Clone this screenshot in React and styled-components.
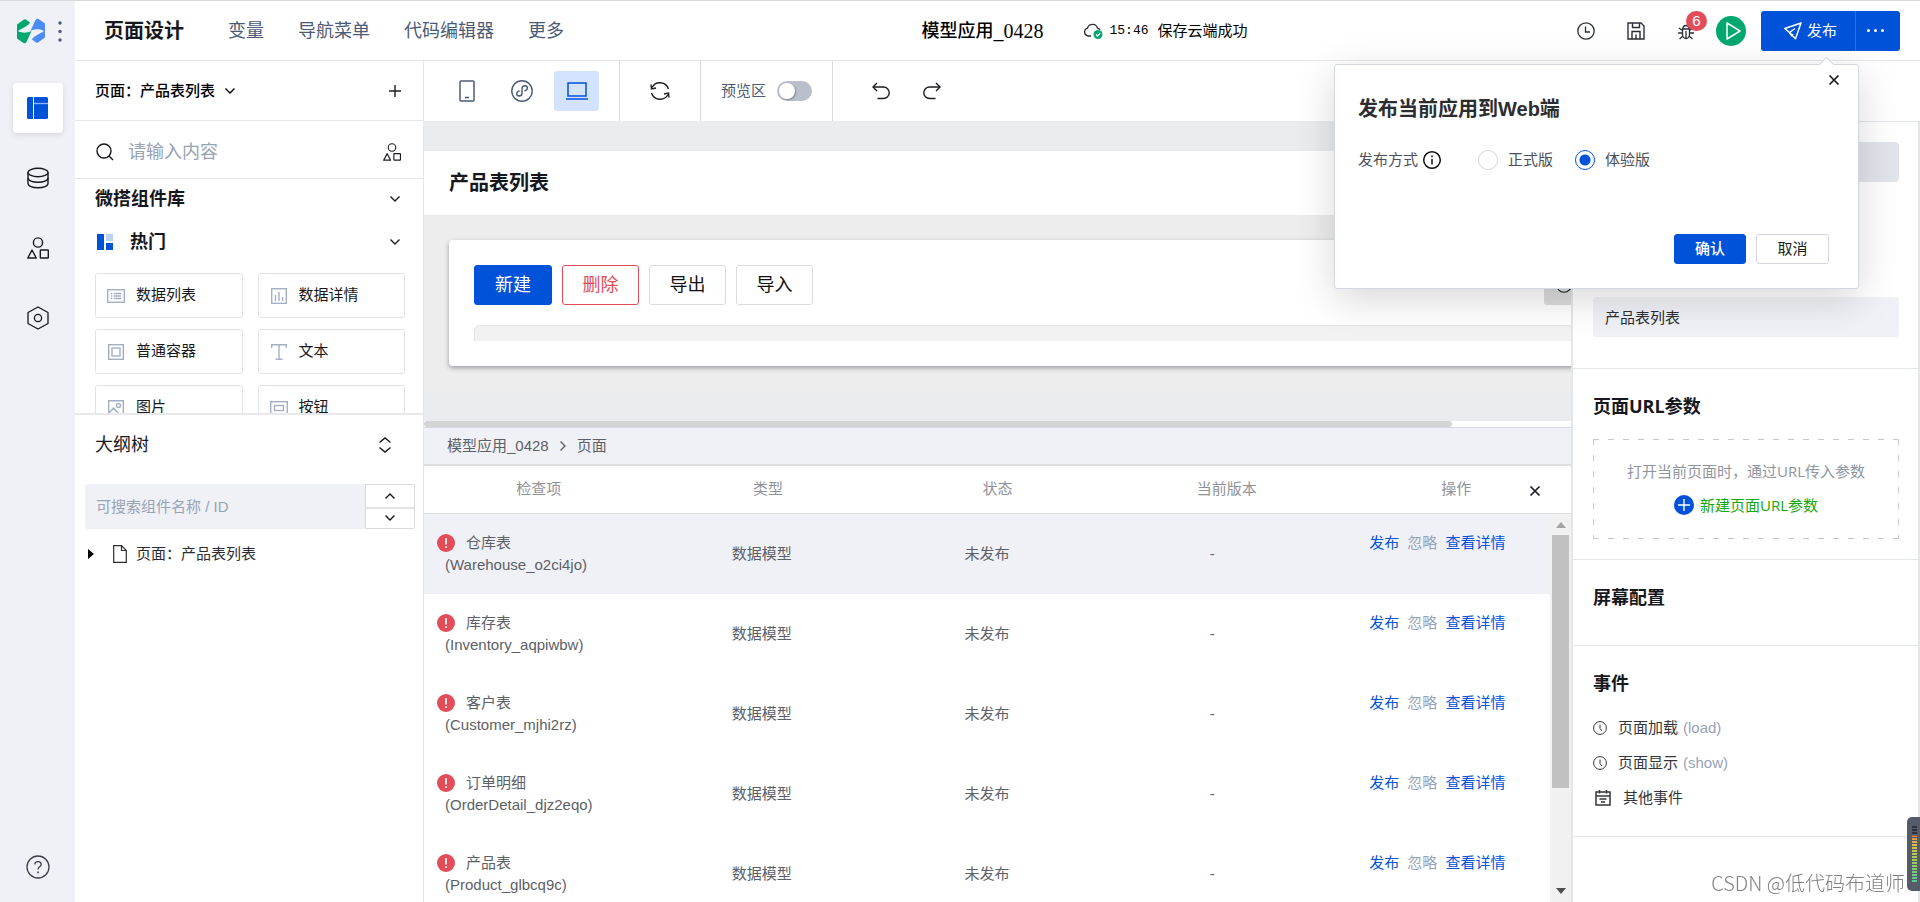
import React, { useState } from 'react';
import styled, { createGlobalStyle, css } from 'styled-components';

const SANS = '"Liberation Sans", "Noto Sans CJK SC", sans-serif';
const SONG = '"Liberation Serif", "Noto Sans CJK SC", serif';
const HUMAN = '"Open Sans", "Noto Sans CJK SC", sans-serif';

const BLUE = '#0052d9';
const RED = '#e34d59';
const GREEN = '#00a870';
const PALE = '#f0f1f6';
const LINE = '#e3e6eb';
const INK = '#16181d';

const GlobalStyle = createGlobalStyle`
    * {
        box-sizing: border-box;
    }
    body {
        margin: 0;
        font-family: ${SANS};
        font-size: 15px;
        line-height: 22px;
        color: ${INK};
        background: #fff;
    }
    button, input {
        font: inherit;
        color: inherit;
        margin: 0;
        padding: 0;
        border: 0;
        background: none;
    }
    button {
        cursor: pointer;
    }
    input:focus {
        outline: none;
    }
    h1, h2, h3, p, ul {
        margin: 0;
        padding: 0;
        list-style: none;
    }
    a {
        text-decoration: none;
    }
`;

/* ---------- icons ---------- */

const Svg = styled.svg`
    display: block;
    flex: none;
    overflow: visible;
`;

const Icon = ({ w = 20, h = w, sw = 1.3, children, ...rest }) => (
    <Svg width={w} height={h} viewBox={`0 0 ${w} ${h}`} fill="none" stroke="currentColor" strokeWidth={sw} aria-hidden="true" {...rest}>
        {children}
    </Svg>
);

const LOGO_HALF = 'M0 5.500 L7 0.500 Q8 0 9 0.500 L13 3.500 C11.500 7 6 8.500 1 12 C5 14.500 11 14 14.500 12 L9.500 23 Q8 25 6.500 24 L0 19.500 Z';

const LogoIcon = () => (
    <Icon w={28} h={24} stroke="none">
        <path d={LOGO_HALF} fill="#00a870" />
        <path d={LOGO_HALF} fill="#4a8bf5" transform="rotate(180 14 12)" />
    </Icon>
);

const MoreDotsIcon = () => (
    <Icon w={4} h={20} stroke="none">
        <circle cx="2" cy="2" r="1.700" fill="#4b5b76" />
        <circle cx="2" cy="10.500" r="1.700" fill="#4b5b76" />
        <circle cx="2" cy="19" r="1.700" fill="#4b5b76" />
    </Icon>
);

const LayoutIcon = () => (
    <Icon w={22} stroke="none">
        <rect x="0" y="0" width="21" height="22" rx="1.500" fill={BLUE} />
        <path d="M6.500 0 V22" stroke="#fff" strokeWidth="1" />
        <path d="M7 6.500 H21" stroke="#8fb4ef" strokeWidth="1.400" />
    </Icon>
);

const DatabaseIcon = () => (
    <Icon w={22} sw={1.4}>
        <ellipse cx="11" cy="5.500" rx="10" ry="4.200" />
        <path d="M1 5.500 V16.500 C1 19 5.500 20.700 11 20.700 S21 19 21 16.500 V5.500" />
        <path d="M1 11 C1 13.500 5.500 15.200 11 15.200 S21 13.500 21 11" />
    </Icon>
);

const ShapesIcon = ({ size = 22 }) => (
    <Svg width={size} height={size} viewBox="0 0 22 22" fill="none" stroke="currentColor" strokeWidth="1.400" aria-hidden="true">
        <circle cx="11" cy="5.500" r="4.600" />
        <path d="M5 13 L9.300 21 H0.800 Z" strokeLinejoin="round" />
        <rect x="13.300" y="13" width="8" height="8" rx="0.500" />
    </Svg>
);

const HexIcon = () => (
    <Icon w={22} h={24} sw={1.3}>
        <path d="M11 1 L21 6.500 V17.500 L11 23 L1 17.500 V6.500 Z" strokeLinejoin="round" />
        <circle cx="11" cy="12" r="3.600" />
    </Icon>
);

const HelpIcon = () => (
    <Icon w={24} sw={1.3}>
        <circle cx="12" cy="12" r="11" />
        <path d="M8.800 9.500 C8.800 5.600 15.200 5.600 15.200 9.500 C15.200 11.800 12 11.800 12 14.500" />
        <path d="M12 16.500 V18.200" strokeWidth="1.600" />
    </Icon>
);

const Chevron = ({ up, size = 10 }) => (
    <Icon w={size} h={6} sw={1.4}>
        {up ? <path d={`M0.500 5.500 L${size / 2} 1 L${size - 0.5} 5.500`} /> : <path d={`M0.500 0.500 L${size / 2} 5 L${size - 0.5} 0.500`} />}
    </Icon>
);

const PlusIcon = () => (
    <Icon w={12} sw={1.4}>
        <path d="M6 0 V12 M0 6 H12" />
    </Icon>
);

const SearchIcon = () => (
    <Icon w={18} sw={1.4}>
        <circle cx="9" cy="8" r="7" />
        <path d="M14 13 L18 17" />
    </Icon>
);

const HotIcon = () => (
    <Icon w={18} h={16} stroke="none">
        <rect x="2" width="7" height="16" fill={BLUE} />
        <rect x="11" width="7" height="7" fill="#bcd2f7" />
        <rect x="11" y="9" width="7" height="7" fill={BLUE} />
    </Icon>
);

const PhoneIcon = () => (
    <Icon w={16} h={22} sw={1.5}>
        <rect x="1" y="1" width="14" height="20" rx="1" />
        <path d="M6 17.500 H10" />
    </Icon>
);

const MiniAppIcon = () => (
    <Icon w={22} sw={1.4}>
        <circle cx="11" cy="11" r="10.200" />
        <path d="M8.500 10.800 C4.500 12 5.200 16 8 16 C10 16 11 14.800 11 13.200 V8.800 C11 7 12.200 5.800 14 5.800 C17 5.800 17.500 10 13.500 11" />
    </Icon>
);

const LaptopIcon = () => (
    <Icon w={22} h={18} sw={1.5}>
        <rect x="2" y="1" width="18" height="13" />
        <path d="M0 17 H22" />
    </Icon>
);

const RefreshIcon = () => (
    <Icon w={20} sw={1.4}>
        <path d="M2 6.500 A9 9 0 0 1 18.500 8" />
        <path d="M18 13.500 A9 9 0 0 1 1.500 12" />
        <path d="M1 3.500 L1.500 8 L6 7" />
        <path d="M19 16.500 L18.500 12 L14 13" />
    </Icon>
);

const UndoIcon = ({ flip }) => (
    <Icon w={18} h={18} sw={1.4}>
        <g transform={flip ? 'translate(18 0) scale(-1 1)' : undefined}>
            <path d="M5 1 L1 5 L5 9" />
            <path d="M1 5 H11.500 A5.700 5.700 0 0 1 11.500 16.500 H5.500" />
        </g>
    </Icon>
);

const CloudIcon = () => (
    <Icon w={20} h={16} sw={1.3}>
        <path d="M8 13 H5 A4 4 0 0 1 4.500 5.200 A5.200 5.200 0 0 1 14.500 5.200 A3.500 3.500 0 0 1 17 7" stroke="#2a2e36" />
        <circle cx="15" cy="11.500" r="4.500" fill={GREEN} stroke="none" />
        <path d="M13 11.500 L14.500 13 L17.200 10.300" stroke="#fff" />
    </Icon>
);

const ClockIcon = ({ size = 18 }) => (
    <Svg width={size} height={size} viewBox="0 0 18 18" fill="none" stroke="currentColor" strokeWidth="1.300" aria-hidden="true">
        <circle cx="9" cy="9" r="8.200" />
        <path d="M8.500 4.500 V10 H13" />
    </Svg>
);

const EventClockIcon = () => (
    <Icon w={14} sw={1}>
        <circle cx="7" cy="7" r="6.400" />
        <path d="M7 3.500 V7.500 L9 10" />
    </Icon>
);

const SaveIcon = () => (
    <Icon w={18} sw={1.4}>
        <path d="M1 1 H14 L17 4 V17 H1 Z" />
        <path d="M5.500 1 V5.500 H12.500 V1" />
        <path d="M5 17 V9.500 H13 V17 M9 12.500 V17" />
    </Icon>
);

const BugIcon = () => (
    <Icon w={16} h={18} sw={1.3}>
        <path d="M4.500 7 H11.500 V12.500 A3.500 4 0 0 1 4.500 12.500 Z" />
        <path d="M5 7 A3 3.500 0 0 1 11 7 M8 9 V16" />
        <path d="M4.500 8.500 L1 6 M4.500 11 H0 M5 14 L1.500 17 M11.500 8.500 L15 6 M11.500 11 H16 M11 14 L14.500 17" />
    </Icon>
);

const PlayIcon = () => (
    <Icon w={16} h={20} sw={1.5}>
        <path d="M2 2 L15 10 L2 18 Z" strokeLinejoin="round" />
    </Icon>
);

const SendIcon = () => (
    <Icon w={18} sw={1.5}>
        <path d="M17 1 L0.800 6.500 L5.500 10.500 L11.500 16.800 Z" strokeLinejoin="round" />
        <path d="M5.500 10.500 L11 6.500 M5.500 10.500 L7.500 13.500 L9 12" />
    </Icon>
);

const InfoIcon = () => (
    <Icon w={18} sw={1.5} color="#111">
        <circle cx="9" cy="9" r="8.300" />
        <path d="M9 8 V13.500 M9 4.500 V6.200" />
    </Icon>
);

const CloseIcon = () => (
    <Icon w={10} sw={1.7}>
        <path d="M0.500 0.500 L9.500 9.500 M9.500 0.500 L0.500 9.500" />
    </Icon>
);

const FileIcon = () => (
    <Icon w={14} h={18} sw={1.2}>
        <path d="M0.700 0.700 H8.500 L13.300 5.500 V17.300 H0.700 Z" />
        <path d="M8.500 0.700 V5.500 H13.300" />
    </Icon>
);

const CaretIcon = () => (
    <Icon w={6} h={10} stroke="none">
        <path d="M0 0 L6 5 L0 10 Z" fill="#000" />
    </Icon>
);

const CalendarIcon = () => (
    <Icon w={16} sw={1.5}>
        <path d="M1 2 H15 V15 H1 Z M1 6 H15 M4.500 0 V3.500 M11.500 0 V3.500 M4.500 9 H11.500 M6 12 H10" />
    </Icon>
);

const AlertIcon = () => (
    <Icon w={18} stroke="none">
        <circle cx="9" cy="9" r="9" fill={RED} />
        <path d="M9 4 V10.500 M9 12.300 V14" stroke="#fff" strokeWidth="1.600" />
    </Icon>
);

const componentIcons = {
    list: (
        <Icon w={18} h={14} sw={1.4}>
            <rect x="0.700" y="0.700" width="16.600" height="12.600" />
            <path d="M4 4.500 H5.500 M7 4.500 H14 M4 7 H5.500 M7 7 H14 M4 9.500 H5.500 M7 9.500 H14" />
        </Icon>
    ),
    detail: (
        <Icon w={16} sw={1.4}>
            <rect x="0.700" y="0.700" width="14.600" height="14.600" />
            <path d="M4.500 7 V13 M8 4 V13 M11.500 9 V13" />
        </Icon>
    ),
    box: (
        <Icon w={16} sw={1.4}>
            <rect x="0.700" y="0.700" width="14.600" height="14.600" />
            <rect x="4" y="4" width="8" height="8" />
        </Icon>
    ),
    text: (
        <Icon w={16} sw={1.4}>
            <path d="M0.700 4 V0.700 H15.300 V4 M8 0.700 V15.300 M4.500 15.300 H11.500" />
        </Icon>
    ),
    image: (
        <Icon w={16} sw={1.4}>
            <path d="M0.700 15.300 V0.700 H15.300 V15.300 Z M1 13 L5.500 8 L11 14" />
            <circle cx="10.500" cy="5.500" r="2" />
        </Icon>
    ),
    button: (
        <Icon w={18} h={14} sw={1.4}>
            <rect x="0.700" y="0.700" width="16.600" height="12.600" />
            <rect x="4.500" y="4.500" width="9" height="5" />
        </Icon>
    ),
};

/* ---------- frame ---------- */

const Shell = styled.div`
    display: flex;
    height: 100vh;
    overflow: hidden;
    border-top: 1px solid #d9dadc;
`;

const Rail = styled.nav`
    flex: none;
    width: 75px;
    display: flex;
    flex-direction: column;
    align-items: center;
    background: ${PALE};
    padding-bottom: 23px;
`;

const RailTop = styled.div`
    display: flex;
    align-items: center;
    gap: 13px;
    align-self: stretch;
    height: 60px;
    padding-left: 17px;
    margin-bottom: 22px;
`;

const RailButton = styled.button`
    display: grid;
    place-items: center;
    width: 50px;
    height: 50px;
    margin-bottom: 20px;
    border-radius: 4px;
    ${props => props.$active && css`
        background: #fff;
        box-shadow: 0 2px 6px rgba(0, 0, 0, 0.1);
    `}
    ${props => props.$last && css`
        margin: auto 0 -13px;
        color: #3c4048;
    `}
`;

const Main = styled.div`
    flex: 1;
    min-width: 0;
    display: flex;
    flex-direction: column;
`;

const Header = styled.header`
    flex: none;
    display: flex;
    align-items: center;
    justify-content: space-between;
    height: 60px;
    padding: 0 20px 0 29px;
    border-bottom: 1px solid ${LINE};
`;

const NavGroup = styled.div`
    display: flex;
    align-items: center;
    gap: 34px;
    padding-right: 44px;
`;

const PageTitle = styled.h1`
    font-size: 20px;
    line-height: 28px;
    margin-right: 10px;
`;

const NavLink = styled.a`
    font-size: 18px;
    color: #4b5b76;
`;

const AppName = styled.div`
    display: flex;
    align-items: center;
    font-family: ${SONG};
    font-size: 18px;
    font-weight: 500;
    color: #000;
`;

const AppDigits = styled.span`
    font-size: 20px;
`;

const SaveState = styled.div`
    display: flex;
    align-items: center;
    gap: 6px;
    margin-left: 40px;
    font-size: 15px;
    font-weight: 400;
`;

const SaveTime = styled.span`
    font-family: "Liberation Mono", monospace;
    font-size: 13px;
    margin-right: 3px;
`;

const HeaderTools = styled.div`
    display: flex;
    align-items: center;
`;

const ToolIcon = styled.button`
    position: relative;
    display: grid;
    place-items: center;
    width: 50px;
    height: 40px;
    color: #2a2e36;
`;

const Badge = styled.span`
    position: absolute;
    top: 0;
    right: 4px;
    width: 21px;
    height: 20px;
    border-radius: 10px;
    background: ${RED};
    color: #fff;
    line-height: 20px;
    text-align: center;
`;

const RunButton = styled.button`
    display: grid;
    place-items: center;
    width: 30px;
    height: 30px;
    margin: 0 15px 0 5px;
    padding-left: 3px;
    border-radius: 50%;
    background: ${GREEN};
    color: #fff;
`;

const PublishGroup = styled.div`
    position: relative;
    display: flex;
    height: 40px;
    border-radius: 3px;
    background: ${BLUE};
    color: #fff;
`;

const PublishButton = styled.button`
    display: flex;
    align-items: center;
    gap: 5px;
    width: 95px;
    padding-left: 23px;
    border-right: 1px solid #2e72df;
`;

const PublishMore = styled.button`
    display: flex;
    align-items: center;
    justify-content: center;
    gap: 4px;
    width: 44px;
    padding-right: 6px;
`;

const Dot = styled.i`
    width: 3px;
    height: 3px;
    border-radius: 50%;
    background: #fff;
`;

/* ---------- publish popover ---------- */

const Popover = styled.form`
    position: absolute;
    z-index: 10;
    top: 53px;
    right: 41px;
    width: 525px;
    padding: 30px 29px 24px 23px;
    border: 1px solid #d3d7e3;
    border-radius: 3px;
    background: #fff;
    color: #2b2d31;
    box-shadow: 0 10px 40px rgba(0, 0, 0, 0.16);

    &::before {
        content: '';
        position: absolute;
        top: -6px;
        right: 26px;
        width: 10px;
        height: 10px;
        background: #fff;
        border: solid #d3d7e3;
        border-width: 1px 0 0 1px;
        transform: rotate(45deg);
    }
`;

const PopoverClose = styled.button`
    position: absolute;
    top: 10px;
    right: 19px;
    color: #1b1d22;
`;

const PopoverTitle = styled.h2`
    font-size: 20px;
    line-height: 28px;
`;

const RadioRow = styled.div`
    display: flex;
    align-items: center;
    height: 22px;
    margin: 26px 0 63px;
`;

const RadioLegend = styled.span`
    display: flex;
    align-items: center;
    gap: 5px;
    width: 120px;
    color: #4d5057;
`;

const RadioLabel = styled.label`
    display: flex;
    align-items: center;
    gap: 10px;
    margin-right: 22px;
    color: #4d5057;
`;

const Radio = styled.input.attrs({ type: 'radio' })`
    appearance: none;
    width: 20px;
    height: 20px;
    border: 1px solid #d3d7e3;
    border-radius: 50%;

    &:checked {
        border-color: ${BLUE};
        background: radial-gradient(circle, ${BLUE} 5px, #fff 6px);
    }
`;

const PopoverActions = styled.div`
    display: flex;
    justify-content: flex-end;
    gap: 10px;
`;

const SmallButton = styled.button`
    width: ${props => (props.$primary ? 72 : 73)}px;
    height: 30px;
    border-radius: 3px;
    border: 1px solid ${props => (props.$primary ? BLUE : '#d3d7e3')};
    background: ${props => (props.$primary ? BLUE : '#fff')};
    color: ${props => (props.$primary ? '#fff' : '#1b1d22')};
    font-weight: ${props => (props.$primary ? 500 : 400)};
`;

/* ---------- component library ---------- */

const Body = styled.div`
    flex: 1;
    min-height: 0;
    display: flex;
`;

const LeftPanel = styled.aside`
    flex: none;
    width: 349px;
    display: flex;
    flex-direction: column;
    border-right: 1px solid ${LINE};
`;

const PanelBar = styled.div`
    flex: none;
    display: flex;
    align-items: center;
    height: ${props => props.$height}px;
    padding: ${props => props.$top || 0}px ${props => props.$right || 23}px 0 20px;
    border-bottom: ${props => (props.$line ? `1px solid ${LINE}` : '0')};

    & > :last-child {
        margin-left: auto;
    }
`;

const PageSelect = styled.button`
    display: flex;
    align-items: center;
    gap: 10px;
    font-weight: 500;
    color: #000;
`;

const SearchInput = styled.input`
    flex: 1;
    min-width: 0;
    margin-left: 15px;
    font-size: 18px;

    &::placeholder {
        color: #97a3b7;
    }
`;

const LibraryTitle = styled.h2`
    display: flex;
    align-items: center;
    gap: 17px;
    font-size: 18px;
`;

const Library = styled.div`
    flex: none;
    height: 234px;
    overflow: hidden;
`;

const ComponentGrid = styled.div`
    display: grid;
    grid-template-columns: 1fr 1fr;
    gap: 11px 15px;
    padding: 8px 18px 0 20px;
`;

const ComponentCard = styled.button`
    display: flex;
    align-items: center;
    height: 45px;
    padding: 0 0 2px 11px;
    border: 1px solid #e0e3e9;
    border-radius: 3px;
`;

const CardGlyph = styled.span`
    display: grid;
    place-items: center;
    width: 18px;
    margin-right: 11px;
    padding-top: 3px;
    color: #a3b0c4;
`;

const Outline = styled.section`
    flex: 1;
    border-top: 2px solid #e8e8ea;
`;

const OutlineTitle = styled.h2`
    font-size: 18px;
    font-weight: 400;
`;

const SortIcon = styled.button`
    display: grid;
    gap: 4px;
`;

const TreeSearch = styled.div`
    display: flex;
    height: 45px;
    margin: 9px 8px 14px 10px;
`;

const TreeInput = styled.input`
    flex: 1;
    min-width: 0;
    padding: 1px 11px 0;
    border-radius: 3px 0 0 3px;
    background: ${PALE};

    &::placeholder {
        color: #97a3b7;
    }
`;

const Stepper = styled.div`
    display: grid;
    grid-template-rows: 1fr 1fr;
    width: 50px;
    border: 1px solid #d9dadc;
    border-radius: 0 2px 2px 0;
`;

const StepButton = styled.button`
    display: grid;
    place-items: center;

    & + & {
        border-top: 2px solid #e3e4e6;
    }
`;

const TreeRow = styled.div`
    display: flex;
    align-items: center;
    padding-left: 13px;
    color: #2b2d31;

    svg + svg {
        margin: 0 9px 0 19px;
    }
`;

/* ---------- toolbar and canvas ---------- */

const Workspace = styled.div`
    flex: 1;
    min-width: 0;
    display: flex;
    flex-direction: column;
`;

const Toolbar = styled.div`
    flex: none;
    display: flex;
    height: 60px;
`;

const ToolGroup = styled.div`
    display: flex;
    align-items: center;
    justify-content: center;
    gap: ${props => props.$gap || 0}px;
    width: ${props => props.$width}px;
    border-right: ${props => (props.$open ? '0' : '1px solid #d8dbe4')};
    color: #4b5b76;
`;

const DeviceButton = styled.button`
    display: grid;
    place-items: center;
    width: 45px;
    height: 40px;
    border-radius: 3px;
    color: ${props => (props.$active ? BLUE : '#4b5b76')};
    background: ${props => (props.$active ? '#d3e3fd' : 'none')};
`;

const PlainButton = styled.button`
    display: grid;
    place-items: center;
    color: #1b1d22;
`;

const SwitchLabel = styled.label`
    display: flex;
    align-items: center;
    gap: 11px;
`;

const Switch = styled.input.attrs({ type: 'checkbox', role: 'switch' })`
    appearance: none;
    width: 35px;
    height: 20px;
    border-radius: 10px;
    background: #b9c0cc;

    &::before {
        content: '';
        display: block;
        width: 16px;
        height: 16px;
        margin: 2px;
        border-radius: 50%;
        background: #fff;
        box-shadow: 1px 1px 2px rgba(0, 0, 0, 0.3);
    }
    &:checked::before {
        margin-left: 17px;
    }
`;

const Split = styled.div`
    flex: 1;
    min-height: 0;
    display: flex;
`;

const Center = styled.main`
    flex: 1;
    min-width: 0;
    display: flex;
    flex-direction: column;
    overflow: hidden;
`;

const Canvas = styled.div`
    flex: none;
    padding: 30px 0;
    background: #ebecf0;
    overflow: hidden;
`;

/* the designed page is a little wider than the viewport, see the scrollbar below */
const CanvasPage = styled.div`
    width: 111.6%;
    background: #ededed;
`;

const CanvasHeading = styled.h2`
    padding: 18px 25px;
    font-size: 20px;
    line-height: 28px;
    background: #fff;
`;

const CanvasPad = styled.div`
    padding: 25px;
`;

const DataCard = styled.div`
    padding: 25px;
    border-radius: 4px;
    background: #fff;
    box-shadow: 0 2px 5px rgba(30, 35, 50, 0.4);
`;

const DataActions = styled.div`
    display: flex;
    gap: 10px;
    margin-bottom: 20px;
`;

const tones = {
    primary: [BLUE, BLUE, '#fff'],
    danger: ['#fff', RED, RED],
    plain: ['#fff', '#dcdcdc', '#111'],
};

const DataButton = styled.button`
    width: ${props => (props.$tone === 'primary' ? 78 : 77)}px;
    height: 40px;
    border: 1px solid ${props => tones[props.$tone][1]};
    border-radius: 3px;
    background: ${props => tones[props.$tone][0]};
    color: ${props => tones[props.$tone][2]};
    font-size: 18px;
`;

const ColumnSetting = styled.button`
    display: flex;
    align-items: center;
    width: 110px;
    margin-left: auto;
    padding-left: 12px;
    border-radius: 3px;
    background: #dcdcdc;
`;

const DataStrip = styled.div`
    height: 16px;
    border: solid #e2e2e2;
    border-width: 1px 1px 0;
    border-radius: 6px 6px 0 0;
    background: #f2f2f2;
`;

const HScroll = styled.div`
    flex: none;
    height: 7px;
    background: #fff;
    border-bottom: 1px solid #d5d9e3;
`;

const HThumb = styled.div`
    width: 89.6%;
    height: 6px;
    border-radius: 3px;
    background: #d4d4d4;
`;

const Breadcrumb = styled.div`
    flex: none;
    display: flex;
    align-items: center;
    gap: 11px;
    height: 38px;
    padding: 0 23px;
    border-bottom: 2px solid #dddee1;
    background: ${PALE};
    color: #5c5f66;
`;

/* ---------- check list ---------- */

const TableHead = styled.div`
    flex: none;
    position: relative;
    border-bottom: 1px solid #dcdfe3;
`;

const Table = styled.table`
    width: 100%;
    table-layout: fixed;
    border-collapse: collapse;
    color: #5c5f66;
    text-align: center;
`;

const HeadCell = styled.th`
    height: 47px;
    padding: 0 0 2px;
    font-weight: 400;
    color: #8f9298;
`;

const TableClose = styled.button`
    position: absolute;
    top: 20px;
    right: 31px;
    color: #1b1d22;
`;

const TableBody = styled.div`
    flex: 1;
    min-height: 0;
    display: flex;
    overflow: hidden;
`;

const TableScroll = styled.div`
    flex: 1;
    overflow: hidden;
`;

const Row = styled.tr`
    background: ${props => (props.$active ? PALE : '#fff')};
`;

const Cell = styled.td`
    padding: 18px 13px;
    vertical-align: ${props => (props.$top ? 'top' : 'middle')};
`;

const NameLine = styled.div`
    display: flex;
    align-items: center;
    gap: 11px;
`;

const CodeLine = styled.div`
    padding-left: 8px;
    text-align: left;
`;

const RowLinks = styled.div`
    display: flex;
    justify-content: center;
    gap: 8px;
`;

const RowLink = styled.a`
    color: ${props => (props.$muted ? '#97a3b7' : BLUE)};
`;

const VScroll = styled.div`
    flex: none;
    width: 21px;
    display: flex;
    flex-direction: column;
    align-items: center;
    padding: 8px 0;
    background: #f1f1f1;
`;

const VThumb = styled.div`
    flex: none;
    width: 17px;
    height: 68%;
    margin: 7px 0 auto;
    background: #c1c1c1;
`;

/* ---------- inspector ---------- */

const Inspector = styled.aside`
    flex: none;
    width: 349px;
    border: solid ${LINE};
    border-width: 1px 2px 0 2px;
`;

const Section = styled.section`
    height: ${props => props.$height}px;
    padding: 20px 19px 0 20px;
    border-bottom: 1px solid ${LINE};
`;

const TypeBox = styled.div`
    height: 40px;
    border-radius: 4px;
    background: #e1e4ea;
`;

const NameInput = styled.input`
    width: 100%;
    height: 40px;
    margin-top: 115px;
    padding: 0 11px 2px 12px;
    border-radius: 3px;
    background: ${PALE};
    color: #2b2d31;
`;

const SectionTitle = styled.h3`
    padding: 3px 0 5px;
    font-family: ${HUMAN};
    font-size: 18px;
    line-height: 28px;
`;

const DashedBox = styled.div`
    display: flex;
    flex-direction: column;
    align-items: center;
    gap: 12px;
    height: 100px;
    margin-top: 14px;
    padding-top: 21px;
    border-radius: 1px;
    font-family: ${HUMAN};
    color: #8f959e;
    background:
        repeating-linear-gradient(90deg, #c5c8ce 0 6px, transparent 6px 15px) top / 100% 1px no-repeat,
        repeating-linear-gradient(90deg, #c5c8ce 0 6px, transparent 6px 15px) bottom / 100% 1px no-repeat,
        repeating-linear-gradient(#c5c8ce 0 6px, transparent 6px 16px) left / 1px 100% no-repeat,
        repeating-linear-gradient(#c5c8ce 0 6px, transparent 6px 16px) right / 1px 100% no-repeat;
`;

const AddParam = styled.button`
    display: flex;
    align-items: center;
    gap: 6px;
    color: #13a80c;
`;

const AddMark = styled.span`
    display: grid;
    place-items: center;
    width: 20px;
    height: 20px;
    border-radius: 50%;
    background: ${BLUE};
    color: #fff;
`;

const EventList = styled.ul`
    display: grid;
    gap: 13px;
    margin-top: 15px;
`;

const EventItem = styled.li`
    display: flex;
    align-items: center;
    gap: ${props => (props.$other ? 12 : 11)}px;
    padding-left: ${props => (props.$other ? 2 : 0)}px;
    color: #33363d;

    em {
        margin-left: -6px;
        font-style: normal;
        color: #97a3b7;
    }
`;

/* ---------- overlays ---------- */

const Watermark = styled.div`
    position: fixed;
    right: 15px;
    bottom: 5px;
    font-family: "Noto Sans CJK SC", sans-serif;
    font-size: 20px;
    line-height: 28px;
    font-weight: 300;
    color: #808080;
`;

const Meter = styled.div`
    position: fixed;
    right: 0;
    bottom: 11px;
    width: 13px;
    height: 74px;
    padding: 9px 3px 8px 5px;
    border-radius: 5px 0 0 5px;
    background: #565b69;
`;

const MeterBars = styled.div`
    height: 100%;
    background:
        repeating-linear-gradient(transparent 0 2px, #565b69 2px 3px),
        linear-gradient(#2f333d 0 9px, #e8894a 10px, #dcc24a 20px, #a5c957 34px, #55c9a0);
`;

const menus = ['变量', '导航菜单', '代码编辑器', '更多'];

const components = [
    ['list', '数据列表'],
    ['detail', '数据详情'],
    ['box', '普通容器'],
    ['text', '文本'],
    ['image', '图片'],
    ['button', '按钮'],
];

const columns = ['检查项', '类型', '状态', '当前版本', '操作'];

const checks = [
    { name: '仓库表', code: 'Warehouse_o2ci4jo' },
    { name: '库存表', code: 'Inventory_aqpiwbw' },
    { name: '客户表', code: 'Customer_mjhi2rz' },
    { name: '订单明细', code: 'OrderDetail_djz2eqo' },
    { name: '产品表', code: 'Product_glbcq9c' },
];

const PublishPopover = () => {
    const [mode, setMode] = useState('trial');

    return <Popover onSubmit={e => e.preventDefault()}>
        <PopoverClose type="button" aria-label="关闭"><CloseIcon /></PopoverClose>
        <PopoverTitle>发布当前应用到Web端</PopoverTitle>
        <RadioRow>
            <RadioLegend>发布方式<InfoIcon /></RadioLegend>
            <RadioLabel>
                <Radio name="mode" checked={mode === 'formal'} onChange={() => setMode('formal')} />
                正式版
            </RadioLabel>
            <RadioLabel>
                <Radio name="mode" checked={mode === 'trial'} onChange={() => setMode('trial')} />
                体验版
            </RadioLabel>
        </RadioRow>
        <PopoverActions>
            <SmallButton $primary>确认</SmallButton>
            <SmallButton type="button">取消</SmallButton>
        </PopoverActions>
    </Popover>
}

const TopBar = () => {
    return <Header>
        <NavGroup>
            <PageTitle>页面设计</PageTitle>
            {menus.map(m => <NavLink key={m} href="#">{m}</NavLink>)}
        </NavGroup>
        <AppName>
            模型应用<AppDigits>_0428</AppDigits>
            <SaveState>
                <CloudIcon />
                <SaveTime>15:46</SaveTime>
                保存云端成功
            </SaveState>
        </AppName>
        <HeaderTools>
            <ToolIcon aria-label="历史"><ClockIcon /></ToolIcon>
            <ToolIcon aria-label="保存"><SaveIcon /></ToolIcon>
            <ToolIcon aria-label="调试"><BugIcon /><Badge>6</Badge></ToolIcon>
            <RunButton aria-label="运行"><PlayIcon /></RunButton>
            <PublishGroup>
                <PublishButton><SendIcon />发布</PublishButton>
                <PublishMore aria-label="更多"><Dot /><Dot /><Dot /></PublishMore>
                <PublishPopover />
            </PublishGroup>
        </HeaderTools>
    </Header>
}

const SidePanel = () => {
    return <LeftPanel>
        <PanelBar $height={60} $line $right={22}>
            <PageSelect>页面：产品表列表<Chevron /></PageSelect>
            <PlainButton aria-label="新建页面"><PlusIcon /></PlainButton>
        </PanelBar>
        <PanelBar $height={58} $line $top={5} $right={22}>
            <SearchIcon />
            <SearchInput placeholder="请输入内容" aria-label="请输入内容" />
            <PlainButton aria-label="组件"><ShapesIcon size={18} /></PlainButton>
        </PanelBar>
        <Library>
            <PanelBar $height={40}>
                <LibraryTitle>微搭组件库</LibraryTitle>
                <PlainButton aria-label="收起"><Chevron /></PlainButton>
            </PanelBar>
            <PanelBar $height={46}>
                <LibraryTitle><HotIcon />热门</LibraryTitle>
                <PlainButton aria-label="收起"><Chevron /></PlainButton>
            </PanelBar>
            <ComponentGrid>
                {components.map(([icon, label]) => (
                    <ComponentCard key={icon}>
                        <CardGlyph>{componentIcons[icon]}</CardGlyph>
                        {label}
                    </ComponentCard>
                ))}
            </ComponentGrid>
        </Library>
        <Outline>
            <PanelBar $height={60} $right={32}>
                <OutlineTitle>大纲树</OutlineTitle>
                <SortIcon aria-label="展开"><Chevron up size={12} /><Chevron size={12} /></SortIcon>
            </PanelBar>
            <TreeSearch>
                <TreeInput placeholder="可搜索组件名称 / ID" aria-label="可搜索组件名称 / ID" />
                <Stepper>
                    <StepButton aria-label="上一个"><Chevron up /></StepButton>
                    <StepButton aria-label="下一个"><Chevron /></StepButton>
                </Stepper>
            </TreeSearch>
            <TreeRow><CaretIcon /><FileIcon />页面：产品表列表</TreeRow>
        </Outline>
    </LeftPanel>
}

const DesignCanvas = () => {
    return <Canvas>
        <CanvasPage>
            <CanvasHeading>产品表列表</CanvasHeading>
            <CanvasPad>
                <DataCard>
                    <DataActions>
                        <DataButton $tone="primary">新建</DataButton>
                        <DataButton $tone="danger">删除</DataButton>
                        <DataButton $tone="plain">导出</DataButton>
                        <DataButton $tone="plain">导入</DataButton>
                        <ColumnSetting aria-label="列设置"><ClockIcon size={16} /></ColumnSetting>
                    </DataActions>
                    <DataStrip />
                </DataCard>
            </CanvasPad>
        </CanvasPage>
    </Canvas>
}

const CheckList = () => {
    return <>
        <TableHead>
            <Table>
                <thead>
                    <tr>{columns.map(c => <HeadCell key={c}>{c}</HeadCell>)}</tr>
                </thead>
            </Table>
            <TableClose aria-label="关闭"><CloseIcon /></TableClose>
        </TableHead>
        <TableBody>
            <TableScroll>
                <Table>
                    <tbody>
                        {checks.map((item, i) => (
                            <Row key={item.code} $active={i === 0}>
                                <Cell>
                                    <NameLine><AlertIcon />{item.name}</NameLine>
                                    <CodeLine>({item.code})</CodeLine>
                                </Cell>
                                <Cell>数据模型</Cell>
                                <Cell>未发布</Cell>
                                <Cell>-</Cell>
                                <Cell $top>
                                    <RowLinks>
                                        <RowLink href="#">发布</RowLink>
                                        <RowLink href="#" $muted>忽略</RowLink>
                                        <RowLink href="#">查看详情</RowLink>
                                    </RowLinks>
                                </Cell>
                            </Row>
                        ))}
                    </tbody>
                </Table>
            </TableScroll>
            <VScroll>
                <Icon w={10} h={6} stroke="none"><path d="M0 6 L5 0 L10 6 Z" fill="#a3a3a3" /></Icon>
                <VThumb />
                <Icon w={10} h={6} stroke="none"><path d="M0 0 L5 6 L10 0 Z" fill="#505050" /></Icon>
            </VScroll>
        </TableBody>
    </>
}

const PropertyPanel = () => {
    return <Inspector>
        <Section $height={247}>
            <TypeBox />
            <NameInput defaultValue="产品表列表" aria-label="页面名称" />
        </Section>
        <Section $height={191}>
            <SectionTitle>页面URL参数</SectionTitle>
            <DashedBox>
                <p>打开当前页面时，通过URL传入参数</p>
                <AddParam><AddMark><PlusIcon /></AddMark>新建页面URL参数</AddParam>
            </DashedBox>
        </Section>
        <Section $height={86}>
            <SectionTitle>屏幕配置</SectionTitle>
        </Section>
        <Section $height={191}>
            <SectionTitle>事件</SectionTitle>
            <EventList>
                <EventItem><EventClockIcon />页面加载 <em>(load)</em></EventItem>
                <EventItem><EventClockIcon />页面显示 <em>(show)</em></EventItem>
                <EventItem $other><CalendarIcon />其他事件</EventItem>
            </EventList>
        </Section>
    </Inspector>
}

const App = () => {
    return <>
        <GlobalStyle />
        <Shell>
            <Rail>
                <RailTop><LogoIcon /><MoreDotsIcon /></RailTop>
                <RailButton $active aria-label="页面"><LayoutIcon /></RailButton>
                <RailButton aria-label="数据"><DatabaseIcon /></RailButton>
                <RailButton aria-label="组件"><ShapesIcon /></RailButton>
                <RailButton aria-label="设置"><HexIcon /></RailButton>
                <RailButton $last aria-label="帮助"><HelpIcon /></RailButton>
            </Rail>
            <Main>
                <TopBar />
                <Body>
                    <SidePanel />
                    <Workspace>
                        <Toolbar>
                            <ToolGroup $width={196} $gap={10}>
                                <DeviceButton aria-label="手机"><PhoneIcon /></DeviceButton>
                                <DeviceButton aria-label="小程序"><MiniAppIcon /></DeviceButton>
                                <DeviceButton $active aria-label="电脑"><LaptopIcon /></DeviceButton>
                            </ToolGroup>
                            <ToolGroup $width={81}>
                                <PlainButton aria-label="刷新"><RefreshIcon /></PlainButton>
                            </ToolGroup>
                            <ToolGroup $width={132}>
                                <SwitchLabel>预览区<Switch /></SwitchLabel>
                            </ToolGroup>
                            <ToolGroup $width={146} $gap={33} $open>
                                <PlainButton aria-label="撤销"><UndoIcon /></PlainButton>
                                <PlainButton aria-label="重做"><UndoIcon flip /></PlainButton>
                            </ToolGroup>
                        </Toolbar>
                        <Split>
                            <Center>
                                <DesignCanvas />
                                <HScroll><HThumb /></HScroll>
                                <Breadcrumb>
                                    <span>模型应用_0428</span>
                                    <Icon w={6} h={10} sw={1.4}><path d="M0.500 0.500 L5 5 L0.500 9.500" /></Icon>
                                    <span>页面</span>
                                </Breadcrumb>
                                <CheckList />
                            </Center>
                            <PropertyPanel />
                        </Split>
                    </Workspace>
                </Body>
            </Main>
        </Shell>
        <Meter><MeterBars /></Meter>
        <Watermark>CSDN @低代码布道师</Watermark>
    </>
}

export default App;
